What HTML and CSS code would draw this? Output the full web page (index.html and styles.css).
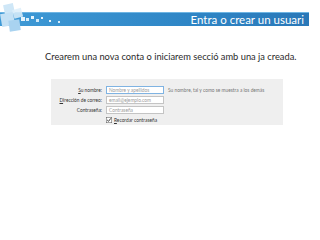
FILE: index.html
```html
<html lang="ca">
<head>
    <meta charset="UTF-8">
    <meta name="viewport" content="width=device-width, initial-scale=1.0">
    <title>Entra o crear un usuari</title>
    <link rel="stylesheet" href="styles.css">
</head>
<body>
    <div class="header">
        <svg class="deco" width="70" height="32" viewBox="0 0 70 32">
            <rect x="4" y="2" width="10" height="10" fill="#cfe7f7" transform="rotate(-12 9 7)"/>
            <rect x="1" y="11" width="13" height="13" fill="#c4e1f5" transform="rotate(-10 7 17)"/>
            <rect x="9" y="18" width="11" height="11" fill="#a9d3f0" transform="rotate(-8 14 23)"/>
            <rect x="13" y="7" width="9" height="9" fill="#ddeffa" opacity="0.85" transform="rotate(-15 17 11)"/>
            <rect x="21" y="15" width="4" height="4" fill="#e6f3fb"/>
            <rect x="26" y="16" width="3" height="3" fill="#d8edf9"/>
            <rect x="31" y="14" width="3" height="3" fill="#e6f3fb"/>
            <rect x="36" y="17" width="3" height="3" fill="#cfe7f7"/>
            <rect x="41" y="15" width="2" height="2" fill="#e6f3fb"/>
            <rect x="49" y="18" width="2" height="2" fill="#e6f3fb"/>
            <rect x="58" y="19" width="2" height="2" fill="#d8edf9"/>
        </svg>
        <span class="title">Entra o crear un usuari</span>
    </div>

    <p class="intro">Crearem una nova conta o iniciarem secció amb una ja creada.</p>

    <div class="panel">
        <label class="lbl"><u>S</u>u nombre:</label>
        <div class="field focused">Nombre y apellidos</div>
        <span class="hint">Su nombre, tal y como se muestra a los demás</span>

        <label class="lbl"><u>D</u>irección de correo:</label>
        <div class="field">email@ejemplo.com</div>
        <span></span>

        <label class="lbl">Contraseña:</label>
        <div class="field">Contraseña</div>
        <span></span>

        <span></span>
        <div class="remember">
            <svg class="check" width="6" height="6" viewBox="0 0 6 6">
                <rect x="0.25" y="0.25" width="5.5" height="5.5" fill="#fff" stroke="#555" stroke-width="0.5"/>
                <path d="M1.2 3 L2.5 4.3 L4.9 1.3" fill="none" stroke="#222" stroke-width="0.9"/>
            </svg>
            <span><u>R</u>ecordar contraseña</span>
        </div>
        <span></span>
    </div>
</body>
</html>
```

FILE: styles.css
```css
body {
    margin: 0;
    background-color: #ffffff;
    font-family: 'Lato', 'Open Sans', sans-serif;
    color: #222;
}

.header {
    position: relative;
    margin-top: 12px;
    width: 309px;
    height: 14px;
    background: linear-gradient(to right, #3f9ad6, #2f86c6 60%, #2a78b8);
    border-top: 1px solid #6fb5e3;
    box-sizing: border-box;
    display: flex;
    justify-content: flex-end;
    align-items: center;
    padding-right: 5px;
}

.deco {
    position: absolute;
    left: 0;
    top: -11px;
}

.title {
    color: #ffffff;
    font-size: 11.5px;
    line-height: 14px;
}

.intro {
    margin: 25px 0 0 45px;
    font-size: 9.3px;
    line-height: 12px;
    color: #2a2a2a;
}

.panel {
    margin: 16px 0 0 51px;
    width: 232px;
    height: 46px;
    box-sizing: border-box;
    background-color: #efefef;
    padding-top: 7px;
    display: grid;
    grid-template-columns: 51px 58px 1fr;
    grid-auto-rows: 8px;
    column-gap: 4px;
    row-gap: 2px;
    font-size: 4.8px;
}

.lbl {
    text-align: right;
    line-height: 8px;
    color: #333;
    white-space: nowrap;
}

.field {
    background-color: #fff;
    border: 0.5px solid #c4c4c4;
    box-sizing: border-box;
    color: #9a9a9a;
    line-height: 7px;
    padding-left: 2px;
    white-space: nowrap;
    overflow: hidden;
}

.field.focused {
    border-color: #7fb3e2;
}

.hint {
    color: #777;
    line-height: 8px;
    white-space: nowrap;
}

.remember {
    display: flex;
    align-items: center;
    gap: 2px;
    line-height: 8px;
    color: #333;
    white-space: nowrap;
}
```
